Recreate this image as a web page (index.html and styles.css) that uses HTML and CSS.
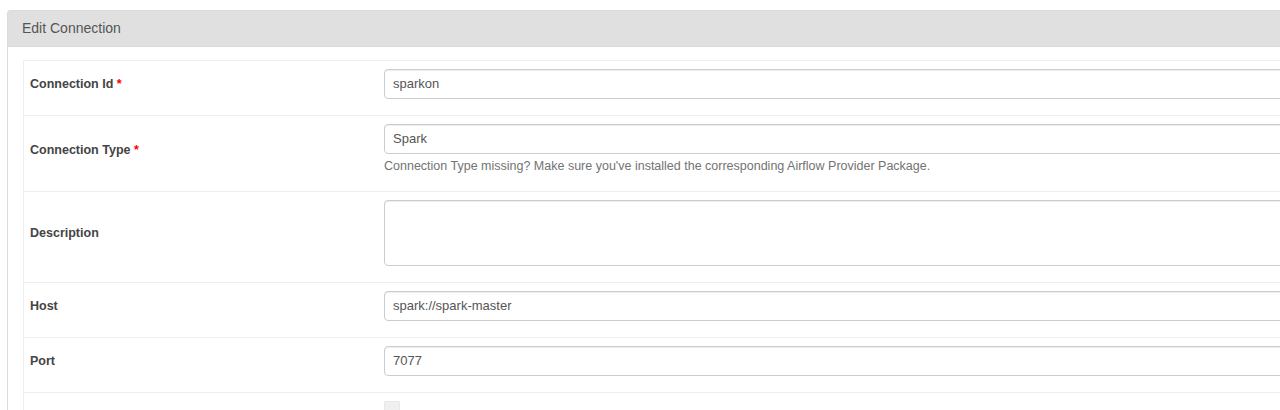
FILE: index.html
```html
<!DOCTYPE html>
<html>
<head>
<meta charset="utf-8">
<link rel="stylesheet" href="styles.css">
</head>
<body>
<div class="panel">
  <div class="panel-heading">Edit Connection</div>
  <div class="panel-body">
    <table class="form-table">
      <tr class="row-short">
        <th class="label-cell">Connection Id <span class="req">*</span></th>
        <td class="field-cell"><div class="input">sparkon</div></td>
      </tr>
      <tr>
        <th class="label-cell">Connection Type <span class="req">*</span></th>
        <td class="field-cell">
          <div class="input">Spark</div>
          <p class="help">Connection Type missing? Make sure you've installed the corresponding Airflow Provider Package.</p>
        </td>
      </tr>
      <tr>
        <th class="label-cell">Description</th>
        <td class="field-cell"><div class="input textarea"></div></td>
      </tr>
      <tr>
        <th class="label-cell">Host</th>
        <td class="field-cell"><div class="input">spark://spark-master</div></td>
      </tr>
      <tr>
        <th class="label-cell">Port</th>
        <td class="field-cell"><div class="input">7077</div></td>
      </tr>
      <tr>
        <th class="label-cell"></th>
        <td class="field-cell"><div class="checkbox"></div></td>
      </tr>
    </table>
  </div>
</div>
</body>
</html>
```
FILE: styles.css
```css
html, body {
  margin: 0;
  padding: 0;
  overflow: hidden;
  background: #fff;
}
body {
  font-family: "Liberation Sans", Arial, sans-serif;
  font-size: 12px;
  color: #333;
  padding: 10px 0 0 7px;
  width: 1600px;
  height: 410px;
}
.panel {
  border: 1px solid #dcdcdc;
  border-radius: 3px 0 0 0;
  width: 1560px;
  height: 420px;
}
.panel-heading {
  background: #e0e0e0;
  border-bottom: 1px solid #d8d8d8;
  color: #555;
  font-size: 14px;
  line-height: 18px;
  padding: 8px 14px 9px 14px;
}
.panel-body {
  padding: 13px 0 0 15px;
}
.form-table {
  border-collapse: collapse;
  width: 1540px;
  border: 1px solid #eeeeee;
}
.form-table tr {
  border-top: 1px solid #eeeeee;
}
.label-cell {
  width: 338px;
  text-align: left;
  vertical-align: middle;
  font-weight: bold;
  color: #444;
  font-size: 12.5px;
  padding: 8px 8px 16px 6px;
}
.req {
  color: #ff0000;
}
.field-cell {
  vertical-align: top;
  padding: 8px 8px 16px 8px;
}
.input {
  box-sizing: border-box;
  height: 30px;
  border: 1px solid #cccccc;
  border-radius: 4px;
  box-shadow: inset 0 1px 1px rgba(0,0,0,0.075);
  padding: 0 8px;
  line-height: 28px;
  color: #555;
  font-size: 13px;
}
.input.textarea {
  height: 66px;
}
.help {
  margin: 4px 0 0 0;
  line-height: 17px;
  color: #737373;
  font-size: 12.5px;
}
.checkbox {
  width: 14px;
  height: 14px;
  background: #f0f0f0;
  border: 1px solid #e8e8e8;
  border-radius: 2px;
}
```
